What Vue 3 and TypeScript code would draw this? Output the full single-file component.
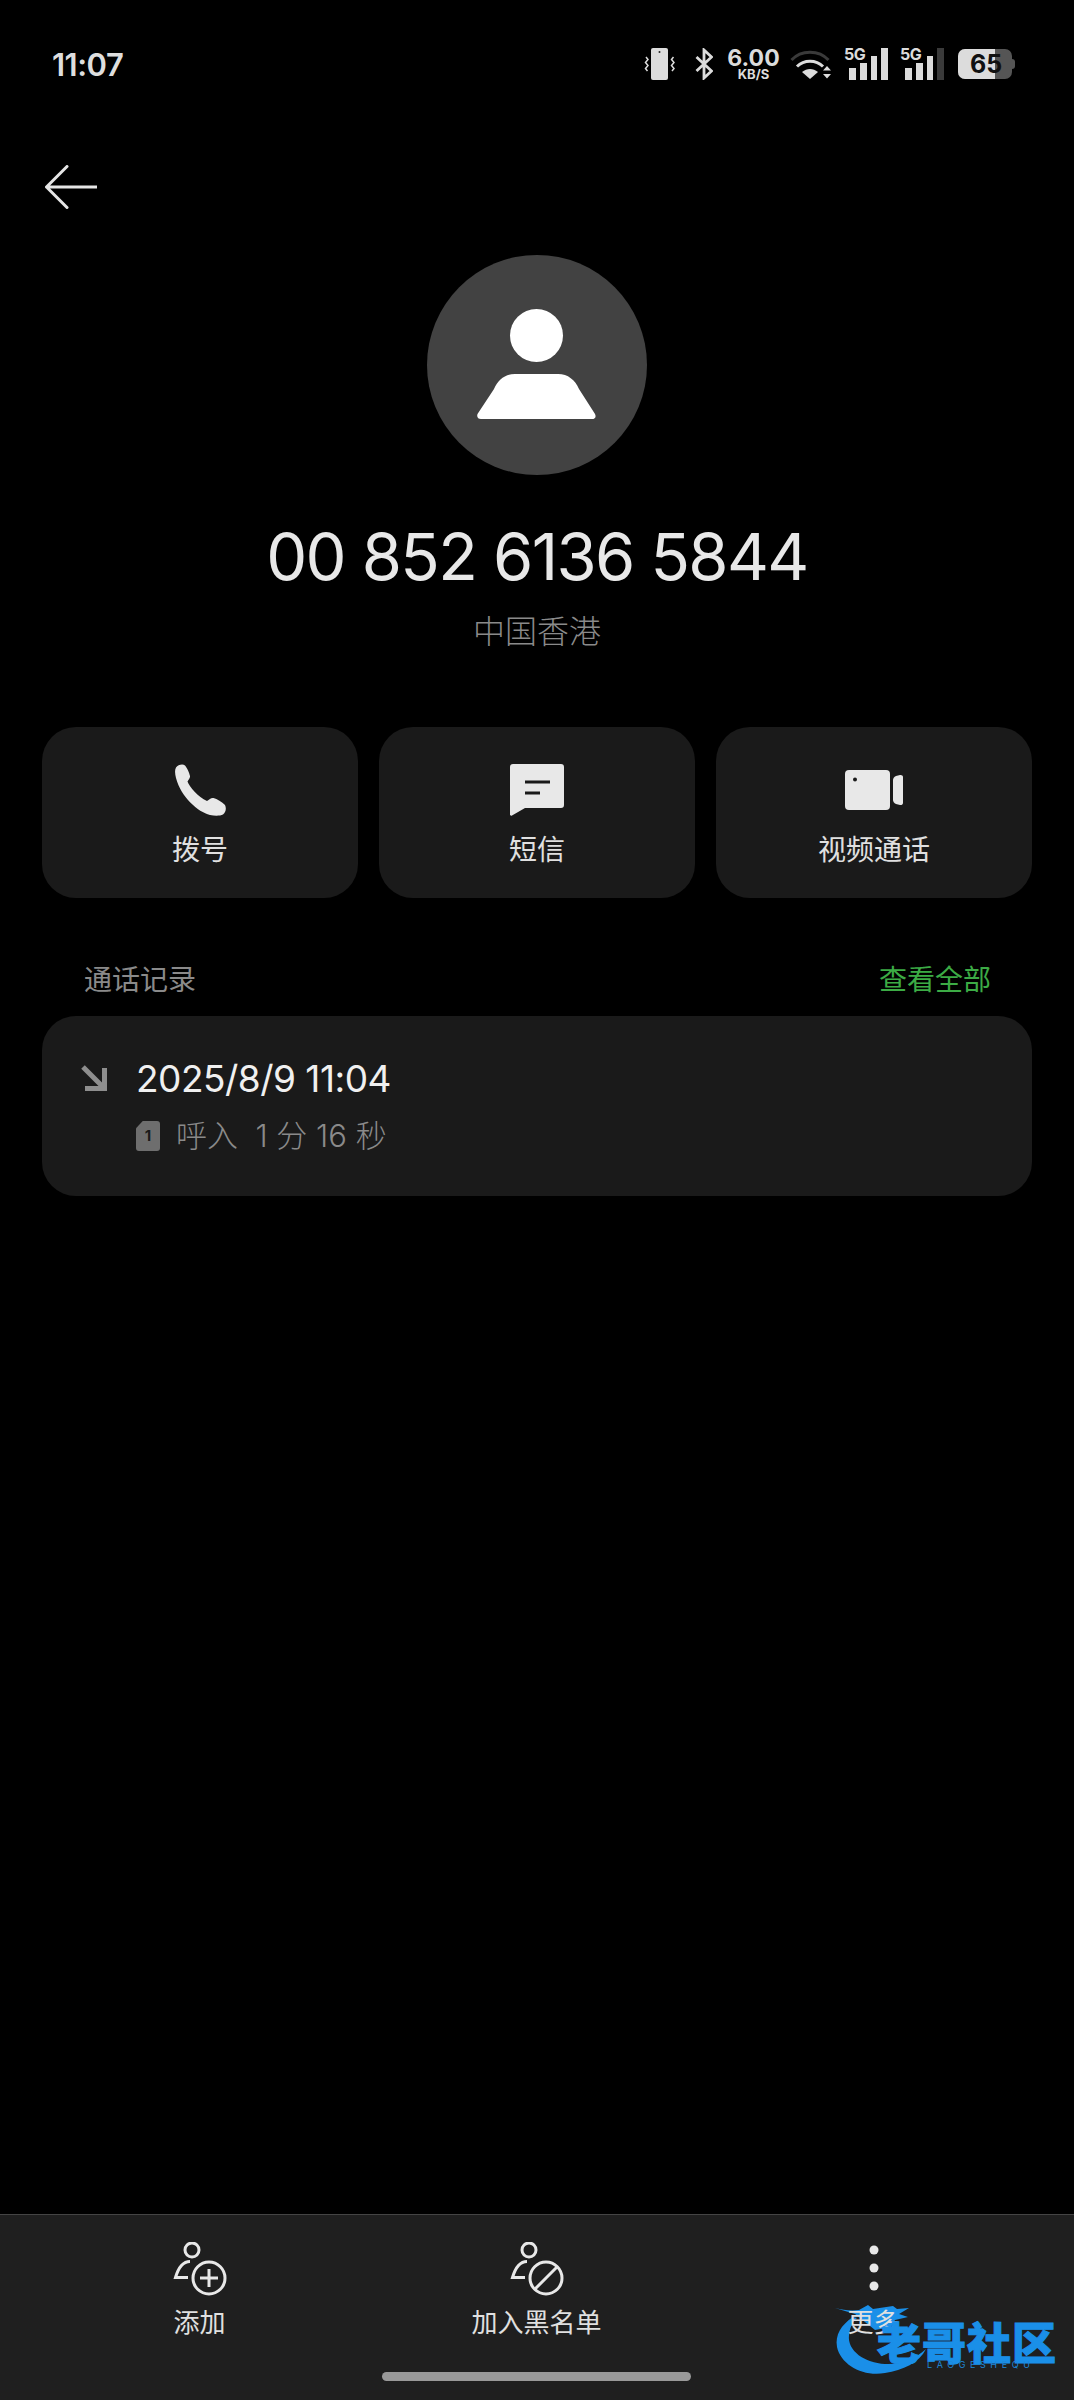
<template>
  <div class="page">
    <header class="status">
      <span class="time">11:07</span>
      <div class="status-icons">
        <svg class="ic-vib" viewBox="0 0 34 32" width="34" height="32">
          <rect x="8" y="0" width="17" height="32" rx="2" fill="#dcdcdc" />
          <circle cx="16.5" cy="4" r="1" fill="#222" />
          <path d="M3 9l2 2.500-2.500 3 2.500 3-2.500 3 2 2.500M30.500 9l-2 2.500 2.500 3-2.500 3 2.500 3-2 2.500" fill="none" stroke="#dcdcdc" stroke-width="1.500" />
        </svg>
        <svg class="ic-bt" viewBox="0 0 18 32" width="18" height="32">
          <path d="M1.500 9l15 14L9 30V2l7.500 7L1.500 23" fill="none" stroke="#dcdcdc" stroke-width="2.800" />
        </svg>
        <div class="speed">
          <span class="speed-num">6.00</span>
          <span class="speed-unit">KB/S</span>
        </div>
        <svg class="ic-wifi" viewBox="0 0 42 32" width="42" height="32">
          <path d="M1.500 12C11 1.500 29 1.500 38.500 12" fill="none" stroke="#3a3a3a" stroke-width="3" />
          <path d="M7 18.500c7-7 19-7 26 0" fill="none" stroke="#dcdcdc" stroke-width="3" />
          <path d="M12 24c5-4 11-4 16 0l-8 7z" fill="#dcdcdc" />
          <path d="M33 22.500l4-4.500 4 4.500zM33 26l4 4.500 4-4.500z" fill="#dcdcdc" />
        </svg>
        <div v-for="(sig, i) in signals" :key="i" class="signal">
          <span class="sig-label">5G</span>
          <span
            v-for="(h, j) in sig.bars"
            :key="j"
            class="sig-bar"
            :class="{ off: j === 3 && sig.dim }"
            :style="{ height: h + 'px' }"
          ></span>
        </div>
        <div class="battery">
          <span class="batt-fill"></span>
          <span class="batt-num">65</span>
          <span class="batt-nub"></span>
        </div>
      </div>
    </header>

    <div class="back-row">
      <svg viewBox="0 0 52 44" width="52" height="44">
        <path d="M22 1.500L1.500 22 22 42.500M1.500 22H51.500" fill="none" stroke="#e6e6e6" stroke-width="3" stroke-linecap="round" stroke-linejoin="round" />
      </svg>
    </div>

    <section class="contact">
      <div class="avatar">
        <svg viewBox="0 0 120 112" width="120" height="112">
          <circle cx="59.500" cy="26.500" r="26.500" fill="#fff" />
          <path d="M38 65H81C91 65 98 71 102 80L118 105C119.500 108 118 110 115 110H4C1 110-.5 108 .5 105L17 80C21 71 28 65 38 65Z" fill="#fff" />
        </svg>
      </div>
      <h1 class="number">00 852 6136 5844</h1>
      <p class="region">中国香港</p>
    </section>

    <div class="actions">
      <div v-for="a in actions" :key="a.id" class="action">
        <div class="action-icon">
          <svg v-if="a.id === 'call'" viewBox="0 0 52 52" width="52" height="52">
            <path d="M2 3.500C4 .5 9-.5 11 1.500c2 2 4.500 8 5 10.500.3 2-1.500 3.500-2.500 5.500 2 5.500 10.500 15.500 19.500 19.500 2.500-1.500 4-3.500 6.500-3 3.500 1 8.500 4 11.500 7 1.500 3 1 7-2 9.500-3 1.500-8 1.500-13 .5C24 48 7 33 2 14 1 10 .5 6 2 3.500z" fill="#e8e8e8" />
          </svg>
          <svg v-else-if="a.id === 'sms'" viewBox="0 0 54 52" width="54" height="52">
            <path d="M3 0h48a3 3 0 0 1 3 3v38a3 3 0 0 1-3 3H15L2 51.500c-1 .5-2 0-2-1V3a3 3 0 0 1 3-3z" fill="#e8e8e8" />
            <path d="M15 18h25M15 29h15" stroke="#1a1a1a" stroke-width="3" />
          </svg>
          <svg v-else viewBox="0 0 58 40" width="58" height="40">
            <rect x="0" y="0" width="45" height="40" rx="4" fill="#e8e8e8" />
            <circle cx="10" cy="9.500" r="2" fill="#1a1a1a" />
            <path d="M48 10c0-1.500 1-3 3-4l4-1c1.500-.3 3 .5 3 2v26c0 1.500-1.500 2.300-3 2l-4-1c-2-1-3-2.500-3-4z" fill="#e8e8e8" />
          </svg>
        </div>
        <span class="action-label">{{ a.label }}</span>
      </div>
    </div>

    <div class="section-head">
      <span class="section-title">通话记录</span>
      <span class="section-link">查看全部</span>
    </div>

    <div class="record">
      <svg class="record-arrow" viewBox="0 0 26 26" width="26" height="26">
        <path d="M2 2l20 20M23.500 3v20.500H4" fill="none" stroke="#8e8e8e" stroke-width="5" />
      </svg>
      <div class="record-body">
        <div class="record-date">2025/8/9 11:04</div>
        <div class="record-sub">
          <span class="sim"><span class="sim-num">1</span></span>
          <span>呼入&nbsp;&nbsp;1 分 16 秒</span>
        </div>
      </div>
    </div>

    <footer class="bottom">
      <div class="bottom-items">
        <div v-for="b in bottomItems" :key="b.id" class="bottom-item">
          <svg v-if="b.id !== 'more'" viewBox="0 0 54 54" width="54" height="54">
            <circle cx="19" cy="8" r="7" fill="none" stroke="#e8e8e8" stroke-width="3" />
            <path d="M17 19.500C9 19.500 5 27 2.500 35.500H15" fill="none" stroke="#e8e8e8" stroke-width="3" />
            <circle cx="36" cy="36" r="16" fill="none" stroke="#e8e8e8" stroke-width="3" />
            <path v-if="b.id === 'add'" d="M36 27v18M27 36h18" stroke="#e8e8e8" stroke-width="3" />
            <path v-else d="M47 25L25 47" stroke="#e8e8e8" stroke-width="3" />
          </svg>
          <svg v-else viewBox="0 0 54 54" width="54" height="54">
            <circle cx="27" cy="8" r="4.500" fill="#e8e8e8" />
            <circle cx="27" cy="26" r="4.500" fill="#e8e8e8" />
            <circle cx="27" cy="44" r="4.500" fill="#e8e8e8" />
          </svg>
          <span class="bottom-label">{{ b.label }}</span>
        </div>
      </div>
      <div class="home-bar"></div>

      <div class="watermark">
        <svg class="wm-swoosh" viewBox="0 0 223 72" width="223" height="72">
          <path d="M0 3C8 5 16 6 24 5L33 0 38 4 58 1 62 4 74 3 64 9 73 12 60 15 56 22 40 25 30 17 20 9Z" fill="#1a8fe8" />
          <path d="M18 12C6 20 0 30 2 42 6 60 28 72 50 68 68 65 84 58 91 44 80 54 66 60 50 59 30 58 12 46 14 30 15 22 18 16 22 13Z" fill="#1a8fe8" />
        </svg>
        <span class="wm-text">老哥社区</span>
        <span class="wm-sub">LAOGESHEQU</span>
      </div>
    </footer>
  </div>
</template>

<script setup lang="ts">
interface LabelItem {
  id: string
  label: string
}

const signals = [
  { bars: [12, 17, 24, 32], dim: false },
  { bars: [12, 17, 24, 32], dim: true },
]

const actions: LabelItem[] = [
  { id: 'call', label: '拨号' },
  { id: 'sms', label: '短信' },
  { id: 'video', label: '视频通话' },
]

const bottomItems: LabelItem[] = [
  { id: 'add', label: '添加' },
  { id: 'block', label: '加入黑名单' },
  { id: 'more', label: '更多' },
]
</script>

<style>
html,
body {
  margin: 0;
  background: #000;
}
</style>

<style scoped>
.page {
  position: relative;
  display: flex;
  flex-direction: column;
  width: 1074px;
  height: 2400px;
  background: #000;
  font-family: Inter, "Noto Sans CJK SC", sans-serif;
  overflow: hidden;
}

.status {
  display: flex;
  justify-content: space-between;
  align-items: center;
  height: 32px;
  padding: 48px 62px 0 52px;
}

.time {
  font-size: 31px;
  font-weight: 600;
  color: #dedede;
  letter-spacing: -0.5px;
}

.status-icons {
  display: flex;
  align-items: center;
  height: 32px;
}

.ic-vib {
  margin-right: 18px;
}

.ic-bt {
  margin-right: 13px;
}

.speed {
  display: flex;
  flex-direction: column;
  align-items: center;
  width: 55px;
  margin-right: 9px;
  color: #dcdcdc;
  font-weight: 700;
}

.speed-num {
  font-size: 23px;
  line-height: 20px;
}

.speed-unit {
  font-size: 13px;
  line-height: 13px;
}

.signal {
  position: relative;
  display: flex;
  align-items: flex-end;
  gap: 4px;
  width: 44px;
  height: 32px;
  justify-content: flex-end;
  margin-left: 12px;
}

.sig-label {
  position: absolute;
  left: 0;
  top: -3px;
  color: #dcdcdc;
  font-size: 16px;
  font-weight: 700;
  line-height: 18px;
  letter-spacing: -0.5px;
}

.sig-bar {
  width: 6.700px;
  background: #dcdcdc;
}

.sig-bar.off {
  background: #3a3a3a;
}

.battery {
  position: relative;
  width: 54px;
  height: 30px;
  margin-left: 14px;
  border-radius: 7px;
  background: #555;
  overflow: visible;
}

.batt-fill {
  position: absolute;
  left: 0;
  top: 0;
  bottom: 0;
  width: 37px;
  background: #dcdcdc;
  border-radius: 7px 0 0 7px;
}

.batt-num {
  position: absolute;
  left: 12px;
  top: 0;
  color: #111;
  font-size: 25px;
  font-weight: 700;
  line-height: 30px;
}

.batt-nub {
  position: absolute;
  right: -3px;
  top: 10px;
  width: 3px;
  height: 10px;
  background: #555;
  border-radius: 0 3px 3px 0;
}

.back-row {
  display: flex;
  padding: 85px 0 0 45px;
}

.contact {
  display: flex;
  flex-direction: column;
  align-items: center;
  margin-top: 46px;
}

.avatar {
  display: flex;
  align-items: center;
  justify-content: center;
  width: 220px;
  height: 220px;
  border-radius: 50%;
  background: #424242;
}

.number {
  margin: 43px 0 0;
  font-size: 65px;
  font-weight: 400;
  line-height: 78px;
  color: #e8e8e8;
  letter-spacing: -1.600px;
}

.region {
  margin: 14px 0 0;
  font-size: 32px;
  font-weight: 300;
  line-height: 44px;
  color: #8a8a8a;
}

.actions {
  display: grid;
  grid-template-columns: repeat(3, 1fr);
  gap: 21px;
  margin: 73px 42px 0 42px;
}

.action {
  display: flex;
  flex-direction: column;
  align-items: center;
  height: 171px;
  border-radius: 34px;
  background: #1a1a1a;
}

.action-icon {
  display: flex;
  align-items: center;
  justify-content: center;
  height: 52px;
  margin-top: 37px;
}

.action-label {
  margin-top: 14px;
  font-size: 28px;
  line-height: 40px;
  font-weight: 400;
  color: #e0e0e0;
}

.section-head {
  display: flex;
  justify-content: space-between;
  align-items: center;
  padding: 0 83px 0 84px;
  margin-top: 60px;
  height: 40px;
  font-size: 28px;
}

.section-title {
  color: #8a8a8a;
}

.section-link {
  color: #3cab45;
}

.record {
  display: flex;
  align-items: flex-start;
  height: 180px;
  margin: 18px 42px 0 42px;
  border-radius: 34px;
  background: #1a1a1a;
}

.record-arrow {
  margin: 49px 0 0 39px;
}

.record-body {
  margin: 41px 0 0 29px;
}

.record-date {
  font-size: 37px;
  line-height: 44px;
  color: #f0f0f0;
  letter-spacing: -0.5px;
}

.record-sub {
  display: flex;
  align-items: center;
  gap: 16px;
  margin-top: 14px;
  font-size: 31px;
  line-height: 42px;
  font-weight: 300;
  color: #8a8a8a;
}

.sim {
  display: flex;
  align-items: center;
  justify-content: center;
  width: 24px;
  height: 30px;
  background: #6e6e6e;
  border-radius: 3px;
  clip-path: polygon(28% 0, 100% 0, 100% 100%, 0 100%, 0 24%);
}

.sim-num {
  font-size: 15px;
  font-weight: 700;
  color: #1a1a1a;
}

.bottom {
  position: relative;
  margin-top: auto;
  height: 185px;
  border-top: 1px solid #444;
  background: #1f1f1f;
}

.bottom-items {
  position: relative;
  z-index: 1;
  display: grid;
  grid-template-columns: 337px 337px 337px;
  padding-left: 31px;
  padding-top: 27px;
}

.bottom-item {
  display: flex;
  flex-direction: column;
  align-items: center;
}

.bottom-label {
  margin-top: 9px;
  font-size: 26px;
  line-height: 36px;
  color: #e0e0e0;
}

.home-bar {
  position: absolute;
  left: 382px;
  top: 157px;
  width: 309px;
  height: 9px;
  border-radius: 5px;
  background: #999;
}

.watermark {
  position: absolute;
  left: 835px;
  top: 90px;
  width: 223px;
  height: 72px;
}

.wm-swoosh {
  position: absolute;
  left: 0;
  top: 0;
}

.wm-text {
  position: absolute;
  z-index: 2;
  left: 42px;
  top: 15px;
  color: #1a8fe8;
  font-size: 44px;
  font-weight: 900;
  line-height: 48px;
  letter-spacing: 1px;
  white-space: nowrap;
  -webkit-text-stroke: 1px #1a8fe8;
}

.wm-sub {
  position: absolute;
  z-index: 2;
  left: 92px;
  top: 55px;
  color: #1e88d8;
  font-size: 9px;
  line-height: 10px;
  letter-spacing: 4.600px;
  white-space: nowrap;
}
</style>
